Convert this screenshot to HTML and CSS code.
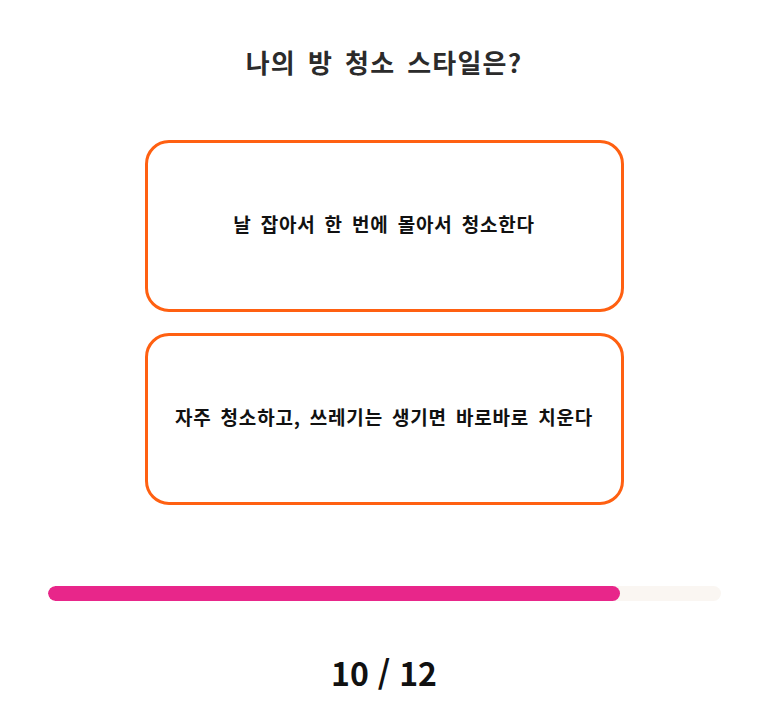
FILE: index.html
```html
<!DOCTYPE html>
<html lang="ko">
<head>
<meta charset="utf-8">
<link rel="stylesheet" href="styles.css">
</head>
<body>
<div class="page">
  <h1 class="title">나의 방 청소 스타일은?</h1>
  <div class="options">
    <button class="option">날 잡아서 한 번에 몰아서 청소한다</button>
    <button class="option">자주 청소하고, 쓰레기는 생기면 바로바로 치운다</button>
  </div>
  <div class="progress">
    <div class="progress-fill" style="width: 85%"></div>
  </div>
  <div class="counter">10 / 12</div>
</div>
</body>
</html>
```
FILE: styles.css
```css
html, body {
  margin: 0;
  padding: 0;
  background: #ffffff;
}
body {
  font-family: "Noto Sans CJK KR", "Noto Sans", sans-serif;
}
.page {
  width: 768px;
  display: flex;
  flex-direction: column;
  align-items: center;
}
.title {
  margin: 44px 0 0;
  font-size: 26px;
  line-height: 36px;
  font-weight: 700;
  letter-spacing: 1.2px;
  word-spacing: 3.5px;
  color: #2b2b2b;
}
.options {
  margin-top: 60px;
  display: flex;
  flex-direction: column;
  gap: 21px;
}
.option {
  width: 479px;
  height: 172px;
  box-sizing: border-box;
  padding: 0 0 5px;
  border: 3px solid #ff6011;
  border-radius: 24px;
  background: #ffffff;
  font-family: inherit;
  font-size: 19px;
  font-weight: 700;
  letter-spacing: 0.8px;
  word-spacing: 3px;
  color: #111111;
  cursor: pointer;
}
.progress {
  margin-top: 81px;
  width: 673px;
  height: 15px;
  border-radius: 8px;
  background: #faf6f2;
  overflow: hidden;
}
.progress-fill {
  height: 100%;
  background: #e8268a;
  border-radius: 8px;
}
.counter {
  margin-top: 51px;
  font-size: 32px;
  line-height: 40px;
  font-weight: 700;
  color: #111111;
}
```
